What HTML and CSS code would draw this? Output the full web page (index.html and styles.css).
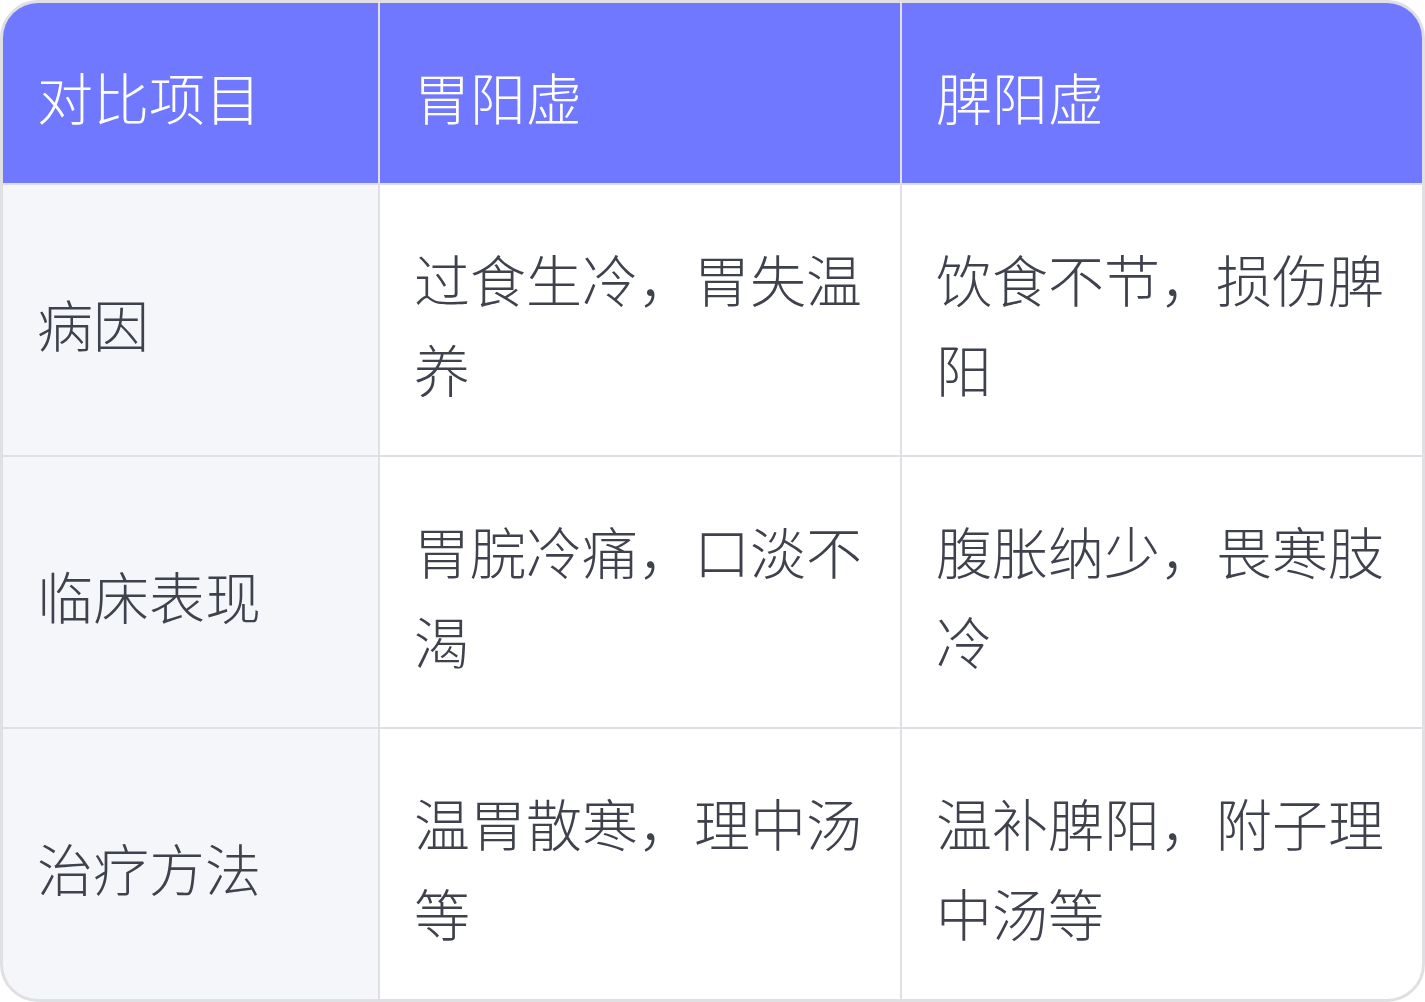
FILE: index.html
```html
<!DOCTYPE html>
<html lang="zh-CN">
<head>
<meta charset="utf-8">
<title>胃阳虚与脾阳虚对比</title>
<link rel="stylesheet" href="styles.css">
</head>
<body>
<div class="table">
  <div class="cell head">对比项目</div>
  <div class="cell head">胃阳虚</div>
  <div class="cell head">脾阳虚</div>

  <div class="cell label">病因</div>
  <div class="cell">过食生冷，胃失温养</div>
  <div class="cell">饮食不节，损伤脾阳</div>

  <div class="cell label">临床表现</div>
  <div class="cell">胃脘冷痛，口淡不渴</div>
  <div class="cell">腹胀纳少，畏寒肢冷</div>

  <div class="cell label">治疗方法</div>
  <div class="cell">温胃散寒，理中汤等</div>
  <div class="cell">温补脾阳，附子理中汤等</div>
</div>
</body>
</html>
```

FILE: styles.css
```css
html, body {
  margin: 0;
  padding: 0;
  background: #ffffff;
}

.table {
  box-sizing: border-box;
  width: 1425px;
  height: 1002px;
  border: 3px solid #e0e0e4;
  border-radius: 38px;
  overflow: hidden;
  display: grid;
  grid-template-columns: 375px 520px 520px;
  grid-template-rows: 180px 270px 270px 270px;
  gap: 2px;
  background: #e0e0e4;
  font-family: "Noto Sans CJK SC", "Noto Sans", sans-serif;
  font-weight: 300;
  font-size: 56px;
  line-height: 90px;
  color: #3f424d;
}

.cell {
  background: #ffffff;
  padding: 5px 34px 0 34px;
  display: flex;
  align-items: center;
  overflow: hidden;
}

.cell.head {
  background: #7078ff;
  color: #ffffff;
}

.cell.label {
  background: #f5f6fa;
}
```
